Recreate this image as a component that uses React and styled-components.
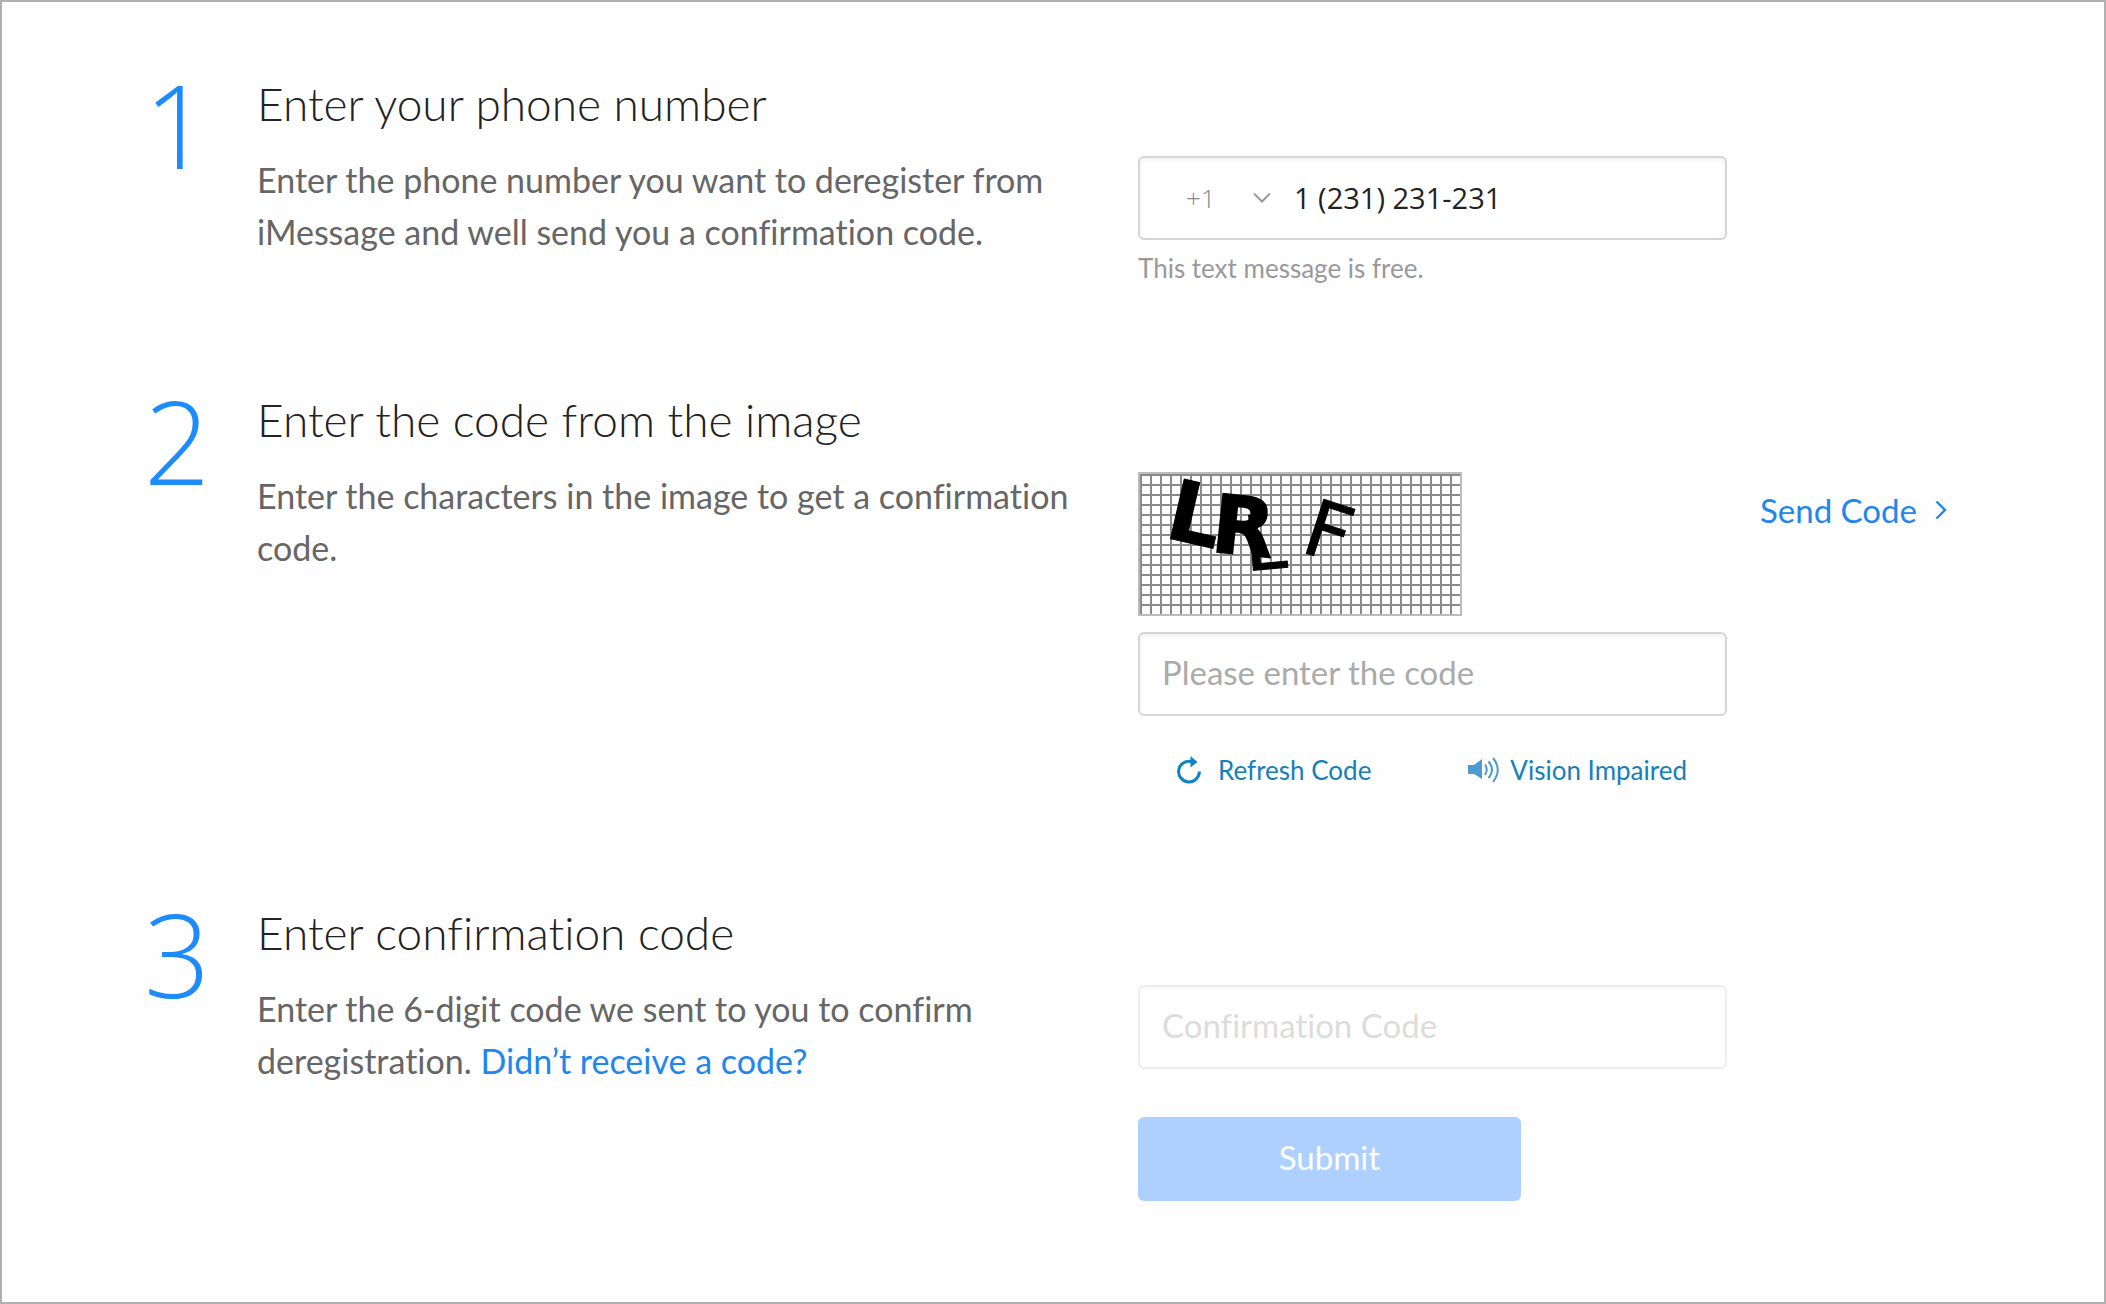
import React, { useState } from 'react'
import styled, { createGlobalStyle } from 'styled-components'

function App() {
    const [phone, setPhone] = useState('1 (231) 231-231');
    const [captcha, setCaptcha] = useState('');

    return (
        <Page>
            <GlobalStyle />
            <Step $gap={100}>
                <StepNumber>1</StepNumber>
                <StepText>
                    <h2>Enter your phone number</h2>
                    <p>Enter the phone number you want to deregister from iMessage and well send you a confirmation code.</p>
                </StepText>
                <Fields>
                    <PhoneBox>
                        <CountryCode>
                            <select aria-label="Country code" defaultValue="+1">
                                <option>+1</option>
                                <option>+44</option>
                                <option>+61</option>
                            </select>
                            <svg width="20" height="12" viewBox="0 0 20 12" fill="none" stroke="#999" strokeWidth="2">
                                <path d="M2 1.500l8 8 8-8" />
                            </svg>
                        </CountryCode>
                        <PhoneInput
                            type="tel"
                            aria-label="Phone number"
                            value={phone}
                            onChange={(e) => setPhone(e.target.value)}
                        />
                    </PhoneBox>
                    <Note>This text message is free.</Note>
                </Fields>
            </Step>

            <Step $gap={111}>
                <StepNumber>2</StepNumber>
                <StepText>
                    <h2>Enter the code from the image</h2>
                    <p>Enter the characters in the image to get a confirmation code.</p>
                </StepText>
                <Fields>
                    <Captcha />
                    <TextInput
                        type="text"
                        aria-label="Code from the image"
                        placeholder="Please enter the code"
                        value={captcha}
                        onChange={(e) => setCaptcha(e.target.value)}
                    />
                    <Helpers>
                        <HelperLink href="#refresh">
                            <RefreshIcon />
                            Refresh Code
                        </HelperLink>
                        <HelperLink href="#audio" $tight>
                            <SpeakerIcon />
                            Vision Impaired
                        </HelperLink>
                    </Helpers>
                </Fields>
                <SendCode href="#send">
                    Send Code
                    <svg width="12" height="20" viewBox="0 0 12 20" fill="none" stroke="currentColor" strokeWidth="2.4">
                        <path d="M1.5 1.5L10 10l-8.5 8.5" />
                    </svg>
                </SendCode>
            </Step>

            <Step $gap={0}>
                <StepNumber>3</StepNumber>
                <StepText>
                    <h2>Enter confirmation code</h2>
                    <p>
                        Enter the 6-digit code we sent to you to confirm deregistration. <a href="#help">Didn’t receive a code?</a>
                    </p>
                </StepText>
                <Fields>
                    <TextInput type="text" aria-label="Confirmation code" placeholder="Confirmation Code" disabled />
                    <Submit type="button" disabled>Submit</Submit>
                </Fields>
            </Step>
        </Page>
    )
}

function Captcha() {
    return (
        <CaptchaImage viewBox="0 0 324 144" role="img" aria-label="Captcha image">
            <defs>
                <pattern id="mesh" x="2" y="2" width="10" height="10" patternUnits="userSpaceOnUse">
                    <path d="M1 0v10M0 1h10" stroke="#8a8a8a" strokeWidth="2" />
                </pattern>
            </defs>
            <rect width="324" height="144" fill="#fff" />
            <rect x="2" y="2" width="320" height="140" fill="url(#mesh)" />
            <rect x="1" y="1" width="322" height="142" fill="none" stroke="#bcbcbc" strokeWidth="2" />
            <g fontFamily="DejaVu Sans, sans-serif" fill="#000" stroke="#000">
                <text fontSize="84" fontWeight="700" strokeWidth="1" transform="translate(25 65) rotate(13)">L</text>
                <text fontSize="80" fontWeight="700" strokeWidth="2" transform="translate(72 79) rotate(6)">R</text>
                <text fontSize="76" strokeWidth="1" transform="translate(108 99) rotate(-5)">L</text>
                <text fontSize="78" strokeWidth="1" transform="translate(161 79) rotate(18)">F</text>
            </g>
        </CaptchaImage>
    )
}

function RefreshIcon() {
    return (
        <svg width="26" height="30" viewBox="0 0 26 30" fill="none">
            <path d="M15.500 6.500A10.400 10.400 0 1 0 23.400 16.500" stroke="#0f84c4" strokeWidth="3" />
            <path d="M14.500 1l7 6-7 5.500z" fill="#0f84c4" />
        </svg>
    )
}

function SpeakerIcon() {
    return (
        <svg width="32" height="26" viewBox="0 0 32 26" fill="none">
            <path d="M0 8h6l8-6v20l-8-5H0z" fill="#4d9bd2" />
            <path d="M17 7.500q3.500 5 0 10.500M20.500 4.500q7 8 0 16.500M25 1q9.500 11.500 0 24" stroke="#4d9bd2" strokeWidth="2" />
        </svg>
    )
}

export default App

const GlobalStyle = createGlobalStyle`
    * {
        box-sizing: border-box;
    }

    body {
        margin: 0;
        background: #fefefe;
        color: #666;
        font-family: Lato, "Open Sans", sans-serif;
        font-size: 33px;
        font-variant-ligatures: none;
        line-height: 52px;
    }

    input, select, button {
        font: inherit;
        font-variant-ligatures: none;
    }

    a {
        color: #1f86ee;
        text-decoration: none;
    }
`

const Page = styled.main`
    min-height: 100vh;
    padding: 70px 48px 96px 142px;
    border: 2px solid #b0b0b0;
`

const Step = styled.section`
    display: grid;
    grid-template-columns: 113px minmax(0, 814fr) 67px minmax(0, 589fr) minmax(0, 329fr);
    margin-bottom: ${(props) => props.$gap}px;
`

const StepNumber = styled.div`
    color: #1d8bfa;
    font-family: "Open Sans", sans-serif;
    font-size: 116px;
    font-weight: 300;
    line-height: 104px;
`

const StepText = styled.div`
    h2 {
        margin: 0 0 18px;
        color: #222;
        font-size: 46px;
        font-weight: 300;
        line-height: 64px;
    }

    p {
        margin: 0;
        font-size: 34px;
    }
`

const Fields = styled.div`
    grid-column: 4;
    padding-top: 84px;
`

const fieldBox = `
    width: 100%;
    height: 84px;
    border: 2px solid #d6d6d6;
    border-radius: 6px;
    background: #fff;
    box-shadow: inset 0 2px 4px rgba(0, 0, 0, 0.06);
`

const PhoneBox = styled.div`
    ${fieldBox}
    display: flex;
    align-items: center;
    padding-left: 46px;
    font-family: "Open Sans", sans-serif;
    font-size: 29px;
`

const CountryCode = styled.label`
    position: relative;
    display: flex;
    align-items: center;

    select {
        width: 108px;
        padding: 0;
        border: 0;
        appearance: none;
        background: none;
        color: #888;
        font-size: 26px;
        font-weight: 300;
        outline: none;
    }

    svg {
        position: absolute;
        right: 22px;
        pointer-events: none;
    }
`

const PhoneInput = styled.input`
    flex: 1;
    min-width: 0;
    padding: 0;
    border: 0;
    background: none;
    color: #222;
    outline: none;
`

const Note = styled.p`
    margin: 8px 0 0;
    color: #999;
    font-size: 26px;
    line-height: 40px;
`

const CaptchaImage = styled.svg`
    display: block;
    width: 324px;
    max-width: 100%;
    height: 144px;
    margin-bottom: 16px;
    overflow: visible;
`

const TextInput = styled.input`
    ${fieldBox}
    display: block;
    padding: 0 22px 4px;
    color: #222;
    outline: none;

    &::placeholder {
        color: #aaa;
        opacity: 1;
    }

    &:disabled {
        opacity: 0.4;
    }
`

const Helpers = styled.div`
    display: flex;
    justify-content: space-between;
    padding: 34px 40px 0 38px;
`

const HelperLink = styled.a`
    display: flex;
    align-items: center;
    gap: ${(props) => (props.$tight ? 10 : 16)}px;
    color: #177fb8;
    font-size: 26px;
    line-height: 40px;
`

const SendCode = styled.a`
    grid-column: 5;
    display: flex;
    align-items: center;
    align-self: start;
    gap: 18px;
    padding: 98px 0 0 33px;
    line-height: 48px;
`

const Submit = styled.button`
    display: block;
    width: 65%;
    height: 84px;
    margin-top: 48px;
    padding-bottom: 6px;
    border: 0;
    border-radius: 6px;
    background: #add0ff;
    color: #fff;
`
